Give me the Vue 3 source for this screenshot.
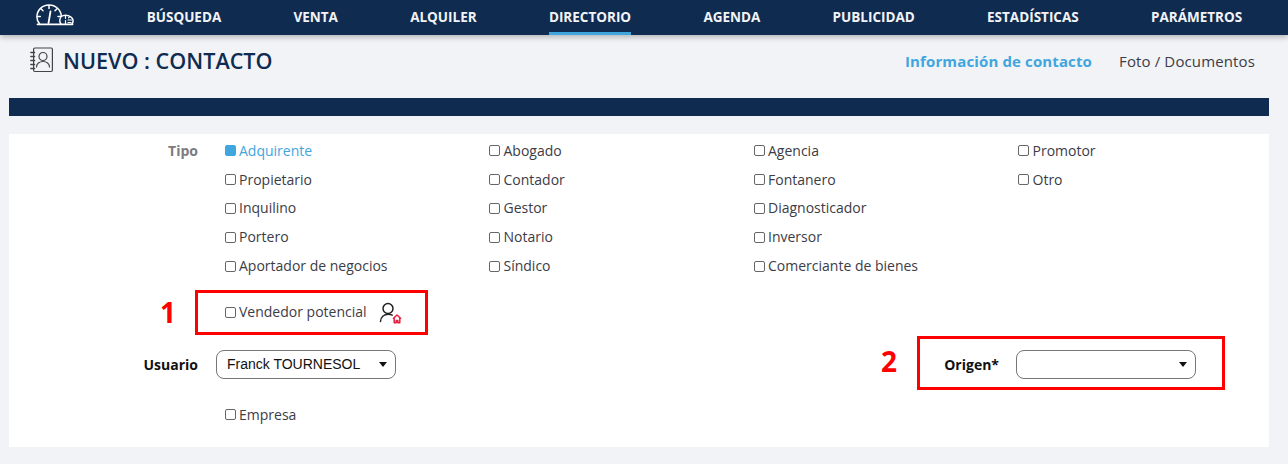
<script setup>
const nav = ['BÚSQUEDA', 'VENTA', 'ALQUILER', 'DIRECTORIO', 'AGENDA', 'PUBLICIDAD', 'ESTADÍSTICAS', 'PARÁMETROS']
const columns = [
  [{ t: 'Adquirente', on: true }, { t: 'Propietario' }, { t: 'Inquilino' }, { t: 'Portero' }, { t: 'Aportador de negocios' }],
  [{ t: 'Abogado' }, { t: 'Contador' }, { t: 'Gestor' }, { t: 'Notario' }, { t: 'Síndico' }],
  [{ t: 'Agencia' }, { t: 'Fontanero' }, { t: 'Diagnosticador' }, { t: 'Inversor' }, { t: 'Comerciante de bienes' }],
  [{ t: 'Promotor' }, { t: 'Otro' }]
]
</script>

<template>
  <div class="page">
    <header class="topbar">
      <svg class="logo" width="38" height="22" viewBox="0 0 38 22" fill="none" stroke="#fff" stroke-width="1.500" stroke-linecap="round">
        <path d="M3.500 19.800C1.800 17.800 .9 15.400.9 12.900.9 6.200 6.300 .9 13 .9s12 5 12.300 11.300" />
        <path d="M1.500 20.300h35" stroke-width="1.800" />
        <path d="M25 20c-.8-1-1.200-2.300-1.200-3.600 0-2.900 2.300-5.100 5.600-5.100 4 0 7.700 2.200 7.700 5.300 0 1.300-.4 2.500-1.100 3.400" />
        <path d="M13 1.500v3M5 4.800l2 2M1.300 12.500h3M21 4.800l-2 2M24.500 12.500h-2.500" />
        <path d="M14.500 7.500l-2 11.500" stroke-width="1.800" />
        <path d="M29.500 12v2.300M32 16h3.500M32.500 13.800l1-1M29.500 16.500v3.500M32 18.500h3" stroke-width="1.200" />
      </svg>
      <nav class="menu">
        <a v-for="item in nav" :key="item" class="menu-item" :class="{ active: item === 'DIRECTORIO' }">{{ item }}</a>
      </nav>
    </header>

    <section class="titlebar">
      <div class="title">
        <svg width="24" height="26" viewBox="0 0 24 26" fill="none" stroke="#444" stroke-width="1.200">
          <rect x="3.600" y="1" width="18.800" height="23.500" rx="1.200" />
          <path d="M.8 5.500h3.800M.8 9.500h3.800M.8 13.500h3.800M.8 17.500h3.800M.8 21.500h3.800" stroke-linecap="round" stroke-width="1.300" />
          <circle cx="13" cy="9.500" r="4" />
          <path d="M6.500 20c0-3.300 2.900-5.500 6.500-5.500s6.500 2.200 6.500 5.500" stroke-linecap="round" />
        </svg>
        <h1>NUEVO : CONTACTO</h1>
      </div>
      <div class="tabs">
        <span class="tab current">Información de contacto</span>
        <span class="tab">Foto / Documentos</span>
      </div>
    </section>

    <div class="band"></div>

    <main class="card">
      <div class="type-row">
        <span class="field-label muted">Tipo</span>
        <div class="type-grid">
          <div v-for="(col, i) in columns" :key="i" class="type-col">
            <label v-for="o in col" :key="o.t" class="check" :class="{ on: o.on }">
              <i class="box"></i>{{ o.t }}
            </label>
          </div>
        </div>
      </div>

      <div class="potential">
        <label class="check"><i class="box"></i>Vendedor potencial</label>
        <svg width="24" height="24" viewBox="0 0 24 24" fill="none">
          <circle cx="9" cy="7.500" r="5" stroke="#222" stroke-width="1.500" />
          <path d="M1.500 20.500c.3-4.300 3.300-7.200 7.800-7.200 1.500 0 2.800.3 3.900.9" stroke="#222" stroke-width="1.500" stroke-linecap="round" />
          <path d="M14 17.800l4-3.800 4 3.800M15.200 16.800v5h2v-2.300h1.600v2.300h2v-5" stroke="#ec1a3d" stroke-width="1.500" stroke-linejoin="round" />
        </svg>
      </div>

      <div class="select-row">
        <div class="user">
          <span class="field-label">Usuario</span>
          <div class="select wide"><span>Franck TOURNESOL</span><i class="caret"></i></div>
        </div>
        <div class="origin">
          <span class="field-label">Origen*</span>
          <div class="select"><span></span><i class="caret"></i></div>
        </div>
      </div>

      <label class="check company"><i class="box"></i>Empresa</label>
    </main>

    <div class="mark one"></div>
    <span class="num n1">1</span>
    <div class="mark two"></div>
    <span class="num n2">2</span>
  </div>
</template>

<style>
html, body { margin: 0; background: #f2f3f6; }
</style>

<style scoped>
.page {
  position: relative;
  width: 1288px;
  height: 464px;
  overflow: hidden;
  background: #f2f3f6;
  font-family: "Open Sans", sans-serif;
  color: #3c3c46;
}
.topbar {
  display: flex;
  align-items: stretch;
  height: 35px;
  background: #0f2b50;
  box-shadow: 0 2px 6px rgba(0, 0, 0, .28);
}
.logo { margin: 4px 0 0 36px; flex: none; }
.menu { display: flex; gap: 72.250px; margin-left: 72.700px; }
.menu-item {
  display: block;
  height: 32px;
  line-height: 34px;
  color: #f2f3f6;
  font-size: 13.500px;
  font-weight: 700;
  white-space: nowrap;
}
.menu-item.active { border-bottom: 3px solid #3fa6de; }
.titlebar {
  display: flex;
  justify-content: space-between;
  align-items: center;
  height: 52px;
  padding: 0 33px 0 30px;
}
.title { display: flex; align-items: center; gap: 9px; }
.title svg { margin-top: -2px; }
h1 {
  margin: 0;
  color: #0f2b50;
  font-size: 21.600px;
  font-weight: 600;
  line-height: 26px;
}
.tabs { display: flex; gap: 27px; font-size: 15px; letter-spacing: .13px; }
.tab.current { color: #3fa6de; font-weight: 700; }
.band { height: 18px; margin: 11px 19px 0 9px; background: #0f2b50; }
.card {
  height: 313px;
  margin: 18px 19px 0 9px;
  background: #fff;
  box-sizing: border-box;
  padding-top: 2.500px;
  font-size: 14px;
}
.type-row { display: flex; }
.field-label {
  width: 189px;
  text-align: right;
  font-weight: 700;
  color: #111;
  flex: none;
  font-size: 14px;
  line-height: 29px;
}
.field-label.muted { color: #7b7b80; line-height: 28px; }
.type-grid { display: flex; margin-left: 27px; }
.type-col { width: 264.500px; display: flex; flex-direction: column; }
.check {
  display: flex;
  align-items: center;
  height: 28.800px;
  white-space: nowrap;
  line-height: 1;
}
.box {
  width: 9px;
  height: 9px;
  margin: 0 3.300px 0 -.3px;
  border: 1px solid #666;
  border-radius: 2px;
  background: #fff;
  flex: none;
}
.check.on { color: #3fa6de; }
.check.on .box { background: #3fa6de; border-color: #3fa6de; }
.potential {
  display: flex;
  align-items: center;
  gap: 12px;
  height: 30px;
  margin: 17px 0 0 216px;
}
.potential svg { margin-top: 2px; }
.select-row {
  display: flex;
  justify-content: space-between;
  margin-top: 23px;
  padding-right: 73px;
}
.user, .origin { display: flex; align-items: center; gap: 18px; }
.origin { gap: 17px; }
.origin .field-label { width: auto; }
.select {
  position: relative;
  box-sizing: border-box;
  width: 180px;
  height: 29px;
  padding-left: 10px;
  border: 1px solid #767676;
  border-radius: 8px;
  background: #fff;
  color: #111;
  font-family: "Liberation Sans", sans-serif;
  font-size: 14px;
  line-height: 26px;
}
.caret {
  position: absolute;
  right: 8px;
  top: 11px;
  border: 4px solid transparent;
  border-top: 5px solid #111;
  border-bottom: 0;
}
.company { margin: 21px 0 0 216px; }
.mark { position: absolute; box-sizing: border-box; border: 3px solid #f00; }
.mark.one { left: 195px; top: 290px; width: 233px; height: 45px; }
.mark.two { left: 917px; top: 336px; width: 308px; height: 54px; }
.num { position: absolute; color: #f00; font-size: 28px; font-weight: 700; line-height: 38px; }
.n1 { left: 160px; top: 293px; }
.n2 { left: 881px; top: 342px; }
</style>
